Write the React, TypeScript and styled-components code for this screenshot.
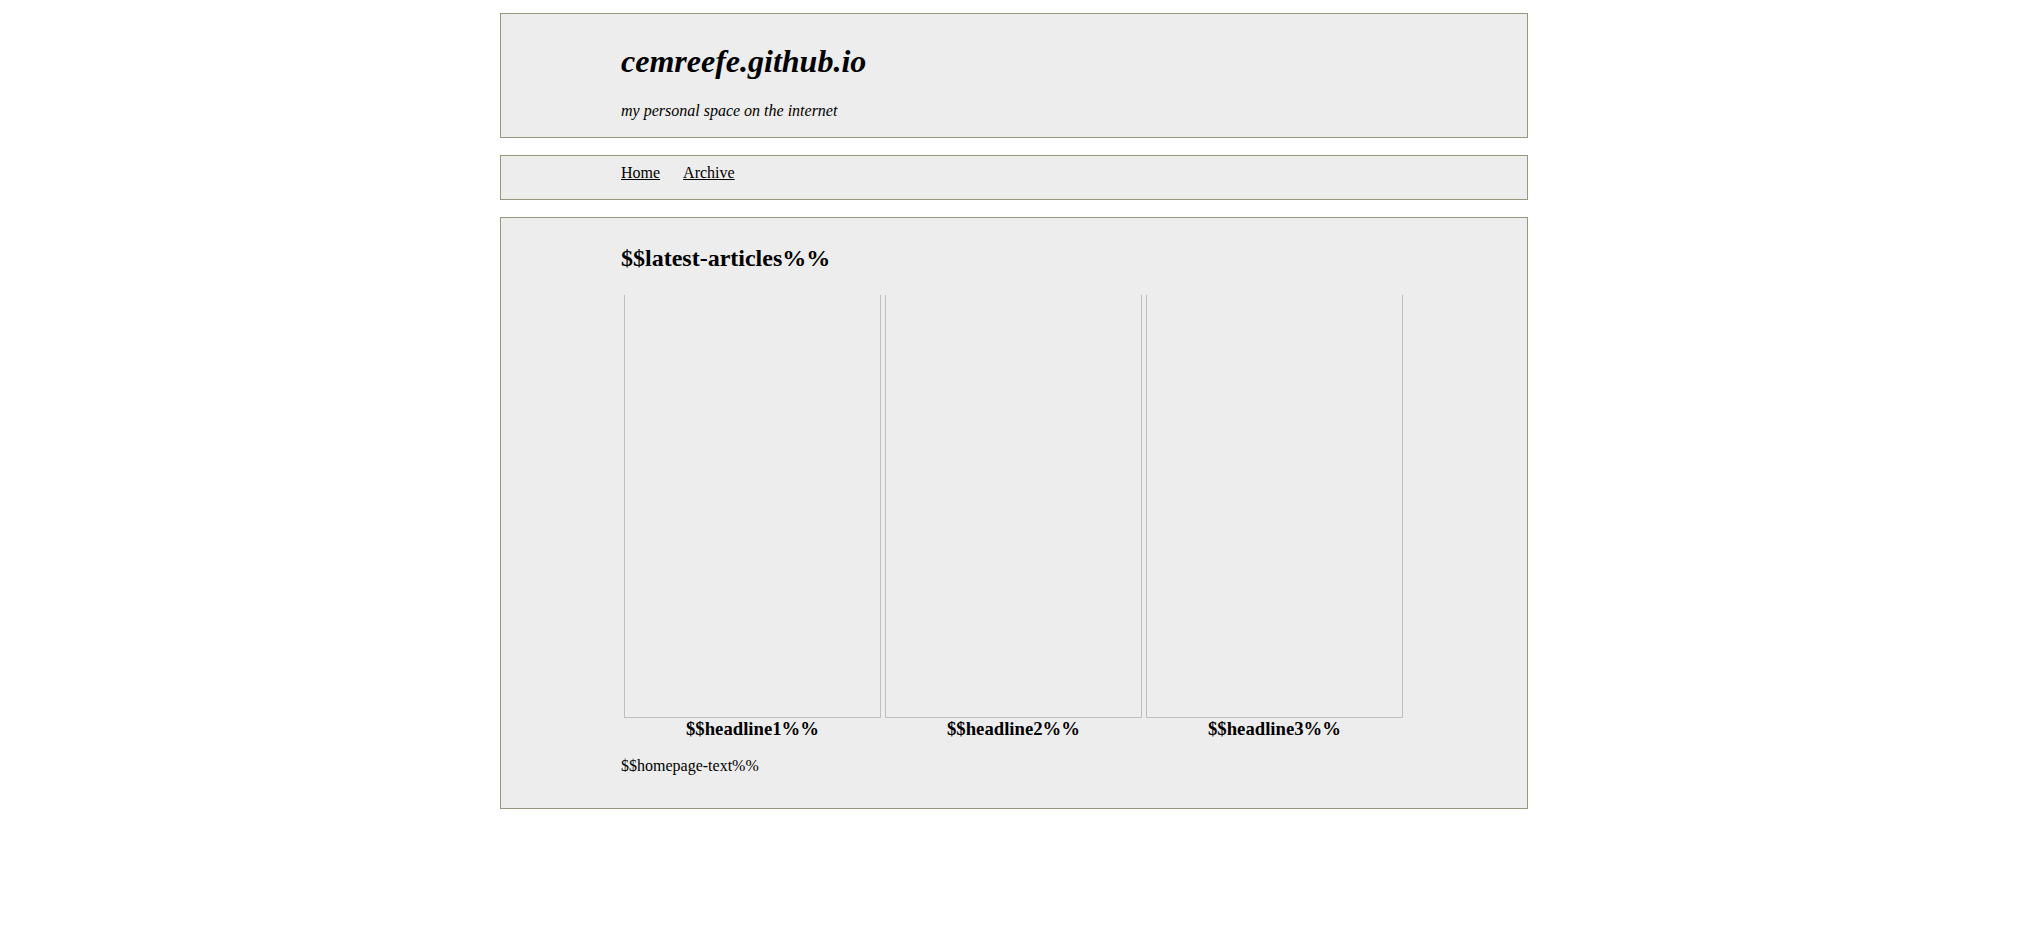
import React from "react";
import styled, { createGlobalStyle } from "styled-components";

const GlobalStyle = createGlobalStyle`
  html, body {
    margin: 0;
    padding: 0;
    background: #ffffff;
  }
  body {
    font-family: "Liberation Serif", "Times New Roman", serif;
    color: #000;
    padding-right: 4px;
  }
`;

const headlines = ["$$headline1%%", "$$headline2%%", "$$headline3%%"];

export default function App(): JSX.Element {
  return (
    <>
      <GlobalStyle />
      <Page>
        <Panel $pad="29px 0 17px">
          <SiteTitle>cemreefe.github.io</SiteTitle>
          <Tagline>my personal space on the internet</Tagline>
        </Panel>
        <Panel $pad="8px 0 17px">
          <Nav>
            <NavLink href="#">Home</NavLink>
            <NavLink href="#">Archive</NavLink>
          </Nav>
        </Panel>
        <Panel $pad="26px 0 33px">
          <SectionTitle>$$latest-articles%%</SectionTitle>
          <Articles>
            {headlines.map((h) => (
              <Article key={h}>
                <Thumb />
                <Headline>{h}</Headline>
              </Article>
            ))}
          </Articles>
          <BodyText>$$homepage-text%%</BodyText>
        </Panel>
      </Page>
    </>
  );
}

const Page = styled.div`
  width: 1028px;
  margin: 0 auto;
  padding-top: 13px;
  display: flex;
  flex-direction: column;
  gap: 17px;
`;

const Panel = styled.section<{ $pad: string }>`
  background: #ededed;
  border: 1px solid #99967f;
  padding: ${(p) => p.$pad};
  padding-left: 120px;
`;

const SiteTitle = styled.h1`
  margin: 0;
  font-size: 32px;
  line-height: 37px;
  font-weight: 700;
  font-style: italic;
`;

const Tagline = styled.p`
  margin: 22px 0 0;
  font-size: 16px;
  line-height: 18px;
  font-style: italic;
`;

const Nav = styled.nav`
  display: flex;
  gap: 23px;
  font-size: 16px;
  line-height: 18px;
`;

const NavLink = styled.a`
  color: #000;
  text-decoration: underline;
`;

const SectionTitle = styled.h2`
  margin: 0;
  font-size: 24px;
  line-height: 28px;
  font-weight: 700;
`;

const Articles = styled.div`
  display: flex;
  gap: 4px;
  margin-top: 23px;
  padding-left: 3px;
`;

const Article = styled.div`
  width: 257px;
  display: flex;
  flex-direction: column;
  align-items: center;
`;

const Thumb = styled.div`
  width: 100%;
  box-sizing: border-box;
  height: 423px;
  border: 1px solid #bfbfbf;
  border-top: none;
`;

const Headline = styled.h3`
  margin: 2px 0 0;
  font-size: 18.72px;
  line-height: 18px;
  font-weight: 700;
  text-align: center;
`;

const BodyText = styled.p`
  margin: 19px 0 0;
  font-size: 16px;
  line-height: 18px;
`;
